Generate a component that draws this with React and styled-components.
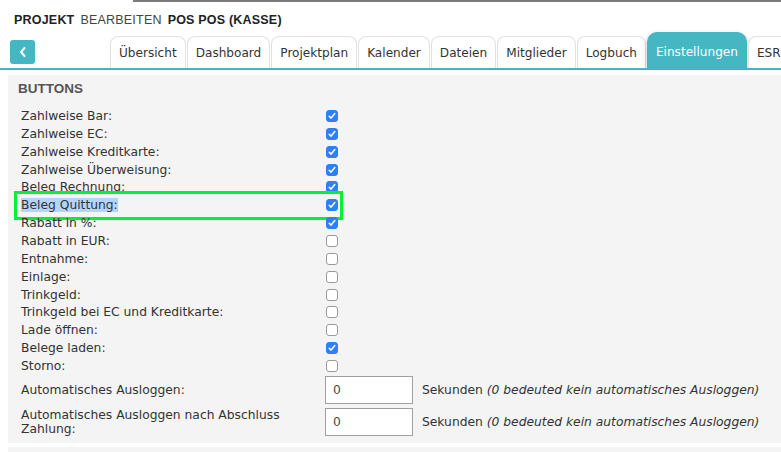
import React from "react";
import styled, { createGlobalStyle } from "styled-components";

const Global = createGlobalStyle`
  html, body { margin: 0; padding: 0; background: #fff; }
  body { font-family: "DejaVu Sans", Verdana, sans-serif; color: #333; overflow: hidden; }
`;

const Page = styled.div`
  width: 781px;
  height: 452px;
  overflow: hidden;
  position: relative;
`;

const TopStrip = styled.div`
  height: 2px;
  margin-left: 133px;
  background: #7a7a7a;
`;

const Header = styled.div`
  display: flex;
  gap: 6px;
  padding: 10px 0 0 14px;
  height: 16px;
  font-family: "Liberation Sans", Arial, sans-serif;
  font-size: 12.5px;
  line-height: 16px;
  color: #222;
  letter-spacing: 0.2px;
`;

const HeadWord = styled.span`
  font-weight: ${(p) => (p.$bold ? 700 : 400)};
  color: ${(p) => (p.$bold ? "#222" : "#444")};
`;

const TabBar = styled.div`
  display: flex;
  align-items: flex-end;
  height: 40px;
  border-bottom: 2px solid #43b6c2;
  overflow: hidden;
`;

const BackButton = styled.div`
  width: 25px;
  height: 24px;
  flex-shrink: 0;
  border-radius: 3px;
  background: #45b7c3;
  margin: 0 0 4px 10px;
  display: flex;
  align-items: center;
  justify-content: center;
`;

const Tabs = styled.div`
  display: flex;
  align-items: flex-end;
  margin-left: 75px;
  gap: 1px;
  flex-shrink: 0;
`;

const Tab = styled.div`
  height: ${(p) => (p.$active ? "36px" : "32px")};
  padding: ${(p) => (p.$active ? "2px 8px 0" : "1px 8px 0")};
  display: flex;
  align-items: center;
  justify-content: center;
  box-sizing: border-box;
  border: 1px solid ${(p) => (p.$active ? "#43b6c2" : "#e2e2e2")};
  border-bottom: none;
  border-radius: ${(p) => (p.$active ? "10px 10px 0 0" : "8px 8px 0 0")};
  background: ${(p) => (p.$active ? "#45b7c3" : "#fff")};
  color: ${(p) => (p.$active ? "#fff" : "#333")};
  font-size: 12.1px;
  white-space: nowrap;
  flex-shrink: 0;
  box-shadow: ${(p) => (p.$active ? "0 2px 5px rgba(0,0,0,0.25)" : "none")};
`;

const Panel = styled.div`
  margin: 5px 0 0 8px;
  background: #f4f4f4;
  padding: 4px 0 8px 10px;
  height: 356px;
`;

const Title = styled.div`
  font-family: "Liberation Sans", Arial, sans-serif;
  font-weight: 700;
  font-size: 13.5px;
  color: #555;
  height: 20px;
  line-height: 20px;
  margin-bottom: 8px;
`;

const Rows = styled.div`
  display: flex;
  flex-direction: column;
  padding-left: 3px;
`;

const Row = styled.div`
  display: grid;
  grid-template-columns: 305px 20px;
  align-items: center;
  height: 17.86px;
  font-size: 12.3px;
  color: #333;
  position: relative;
`;

const Highlight = styled.div`
  position: absolute;
  left: -7px;
  top: -5px;
  width: 323px;
  height: 23px;
  border: 3px solid #00f236;
  pointer-events: none;
`;

const Selected = styled.span`
  background: #b3d5fd;
`;

const Box = styled.div`
  width: 12px;
  height: 12px;
  box-sizing: border-box;
  border-radius: 3px;
  background: ${(p) => (p.$on ? "#2f7ff6" : "#fff")};
  border: 1px solid ${(p) => (p.$on ? "#2f7ff6" : "#9a9a9a")};
  display: flex;
  align-items: center;
  justify-content: center;
`;

const FieldRow = styled.div`
  display: grid;
  grid-template-columns: 295px 88px auto;
  column-gap: 9px;
  align-items: center;
  font-size: 12.3px;
  color: #333;
  margin-top: ${(p) => p.$mt || "0px"};
`;

const FieldLabel = styled.div`
  line-height: 14px;
`;

const Input = styled.div`
  height: 28px;
  box-sizing: border-box;
  border: 1px solid #a0a0a0;
  background: #fff;
  display: flex;
  align-items: center;
  padding-left: 7px;
  color: #444;
`;

const Hint = styled.div`
  color: #333;
  white-space: nowrap;
  em { font-style: italic; }
`;

const Panel2 = styled.div`
  margin: 4px 0 0 8px;
  background: #f4f4f4;
  height: 20px;
`;

const Check = () => (
  <svg width="8" height="8" viewBox="0 0 8 8">
    <path d="M1.2 4.3 L3.1 6.1 L6.8 1.6" stroke="#fff" strokeWidth="1.5" fill="none" strokeLinecap="round" strokeLinejoin="round" />
  </svg>
);

const rows = [
  ["Zahlweise Bar:", true],
  ["Zahlweise EC:", true],
  ["Zahlweise Kreditkarte:", true],
  ["Zahlweise Überweisung:", true],
  ["Beleg Rechnung:", true],
  ["Beleg Quittung:", true, true],
  ["Rabatt in %:", true],
  ["Rabatt in EUR:", false],
  ["Entnahme:", false],
  ["Einlage:", false],
  ["Trinkgeld:", false],
  ["Trinkgeld bei EC und Kreditkarte:", false],
  ["Lade öffnen:", false],
  ["Belege laden:", true],
  ["Storno:", false],
];

const tabs = ["Übersicht", "Dashboard", "Projektplan", "Kalender", "Dateien", "Mitglieder", "Logbuch", "Einstellungen", "ESR"];

export default function App() {
  return (
    <Page>
      <Global />
      <TopStrip />
      <Header>
        <HeadWord $bold>PROJEKT</HeadWord>
        <HeadWord>BEARBEITEN</HeadWord>
        <HeadWord $bold>POS POS (KASSE)</HeadWord>
      </Header>
      <TabBar>
        <BackButton>
          <svg width="10" height="12" viewBox="0 0 10 12">
            <path d="M6.5 2 L3 6 L6.5 10" stroke="#fff" strokeWidth="2" fill="none" strokeLinecap="round" strokeLinejoin="round" />
          </svg>
        </BackButton>
        <Tabs>
          {tabs.map((t) => (
            <Tab key={t} $active={t === "Einstellungen"}>{t}</Tab>
          ))}
        </Tabs>
      </TabBar>
      <Panel>
        <Title>BUTTONS</Title>
        <Rows>
          {rows.map(([label, on, hl]) => (
            <Row key={label}>
              <span>{hl ? <Selected>{label}</Selected> : label}</span>
              <Box $on={on}>{on && <Check />}</Box>
              {hl && <Highlight />}
            </Row>
          ))}
          <FieldRow $mt="1px">
            <FieldLabel>Automatisches Ausloggen:</FieldLabel>
            <Input>0</Input>
            <Hint>Sekunden <em>(0 bedeuted kein automatisches Ausloggen)</em></Hint>
          </FieldRow>
          <FieldRow $mt="4px">
            <FieldLabel>Automatisches Ausloggen nach Abschluss<br />Zahlung:</FieldLabel>
            <Input>0</Input>
            <Hint>Sekunden <em>(0 bedeuted kein automatisches Ausloggen)</em></Hint>
          </FieldRow>
        </Rows>
      </Panel>
      <Panel2 />
    </Page>
  );
}
